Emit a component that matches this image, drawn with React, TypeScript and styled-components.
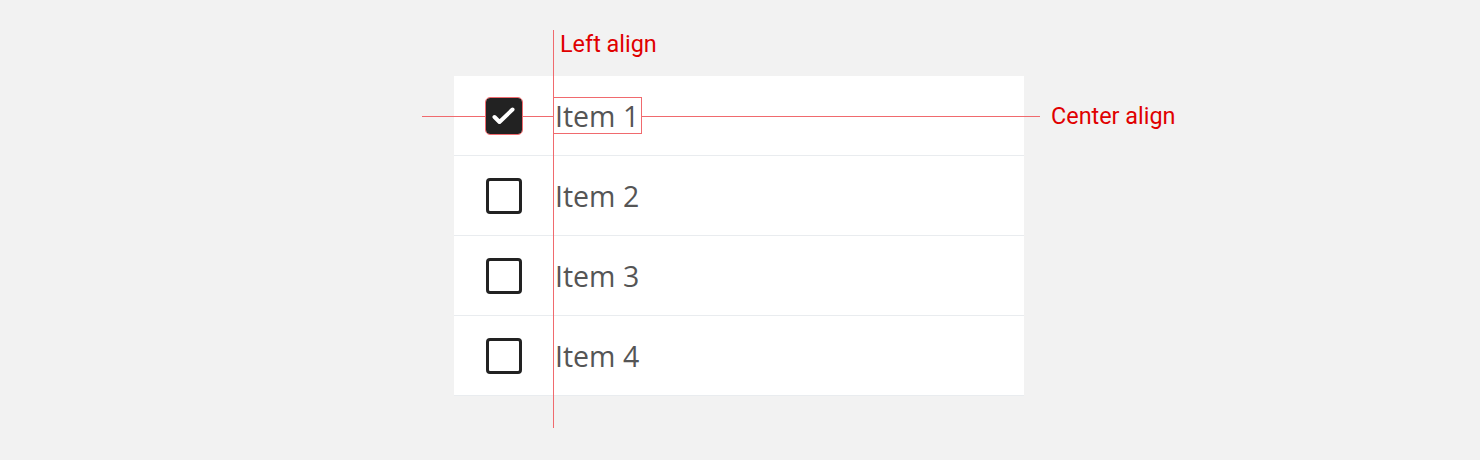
import React from "react";
import styled, { createGlobalStyle } from "styled-components";

const GlobalStyle = createGlobalStyle`
    html, body {
        margin: 0;
        padding: 0;
        background: #f2f2f2;
    }
`;

const Page = styled.div`
    width: 1480px;
    height: 460px;
    display: flex;
    padding: 76px 0 0 454px;
    box-sizing: border-box;
    overflow: hidden;
`;

const Stage = styled.div`
    position: relative;
    width: 570px;
`;

const List = styled.ul`
    list-style: none;
    margin: 0;
    padding: 0;
    background: #ffffff;
`;

const Row = styled.li`
    display: flex;
    align-items: center;
    gap: 31px;
    height: 79px;
    padding-left: 32px;
    border-bottom: 1px solid #e9ecef;
`;

const Box = styled.span<{ $checked?: boolean; $marked?: boolean }>`
    position: relative;
    z-index: 2;
    display: flex;
    align-items: center;
    justify-content: center;
    width: 36px;
    height: 36px;
    box-sizing: border-box;
    border: 3px solid #222222;
    border-radius: 4px;
    background: ${(p) => (p.$checked ? "#222222" : "#ffffff")};
    outline: ${(p) => (p.$marked ? "1px solid #f06a6e" : "none")};
`;

const Label = styled.span<{ $marked?: boolean }>`
    position: relative;
    z-index: ${(p) => (p.$marked ? 2 : 0)};
    display: flex;
    align-items: center;
    height: 37px;
    padding: 0 2px 0 1px;
    box-sizing: border-box;
    font-family: "Open Sans", "Noto Sans", sans-serif;
    font-size: 28.5px;
    color: #555555;
    background: ${(p) => (p.$marked ? "#ffffff" : "transparent")};
    border: 1px solid ${(p) => (p.$marked ? "#f06a6e" : "transparent")};
`;

const VLine = styled.div`
    position: absolute;
    z-index: 1;
    left: 99px;
    top: -46px;
    width: 1px;
    height: 398px;
    background: #f06a6e;
`;

const HLine = styled.div`
    position: absolute;
    z-index: 1;
    left: -32px;
    top: 40px;
    width: 618px;
    height: 1px;
    background: #f06a6e;
`;

const Note = styled.span<{ $left: number; $top: number }>`
    position: absolute;
    left: ${(p) => p.$left}px;
    top: ${(p) => p.$top}px;
    font-family: Roboto, "Liberation Sans", sans-serif;
    font-size: 23.4px;
    line-height: 27px;
    color: #e00000;
    white-space: nowrap;
`;

const Check = () => (
    <svg width="30" height="30" viewBox="0 0 30 30">
        <path d="M5.5 16 L10.5 21 L23.5 8.5" fill="none" stroke="#ffffff" strokeWidth="4" strokeLinecap="round" strokeLinejoin="round" />
    </svg>
);

const items = ["Item 1", "Item 2", "Item 3", "Item 4"];

const App: React.FC = () => {
    return <Page>
        <GlobalStyle />
        <Stage>
            <List>
                {items.map((item, i) => (
                    <Row key={item}>
                        <Box $checked={i === 0} $marked={i === 0}>{i === 0 && <Check />}</Box>
                        <Label $marked={i === 0}>{item}</Label>
                    </Row>
                ))}
            </List>
            <VLine />
            <HLine />
            <Note $left={106} $top={-45}>Left align</Note>
            <Note $left={597} $top={27}>Center align</Note>
        </Stage>
    </Page>
}

export default App
